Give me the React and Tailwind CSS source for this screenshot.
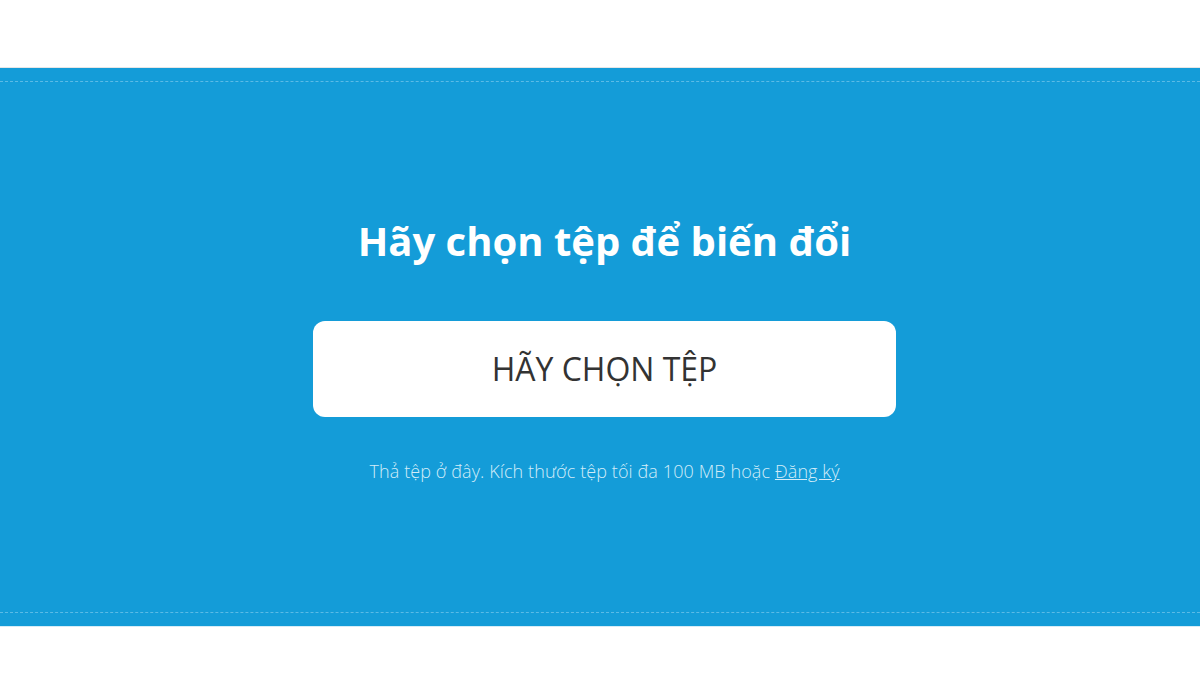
import React from 'react';

export default function App() {
  return (
    <div className="w-[1200px] h-[675px] bg-white" style={{ fontFamily: '"Open Sans", "Noto Sans", sans-serif' }}>
      <div className="h-[68px] border-b border-[#e6e6e6]" />
      <section className="bg-[#149cd8] h-[559px] py-[13px] border-b border-[#d5ecf7]">
        <div className="h-full border-y border-dashed border-[#5bbbe6] flex flex-col items-center pt-[131px] pl-[9px]">
          <h1 className="text-[40px] leading-[56px] font-bold text-white">Hãy chọn tệp để biến đổi</h1>
          <button className="mt-[52px] w-[583px] h-[96px] bg-white rounded-[12px] text-[32px] font-normal text-[#333]">
            HÃY CHỌN TỆP
          </button>
          <p className="mt-[41px] text-[18px] font-light text-[#d2ecf8] tracking-[0.1px]">
            Thả tệp ở đây. Kích thước tệp tối đa 100 MB hoặc <a href="#" className="underline">Đăng ký</a>
          </p>
        </div>
      </section>
    </div>
  );
}
